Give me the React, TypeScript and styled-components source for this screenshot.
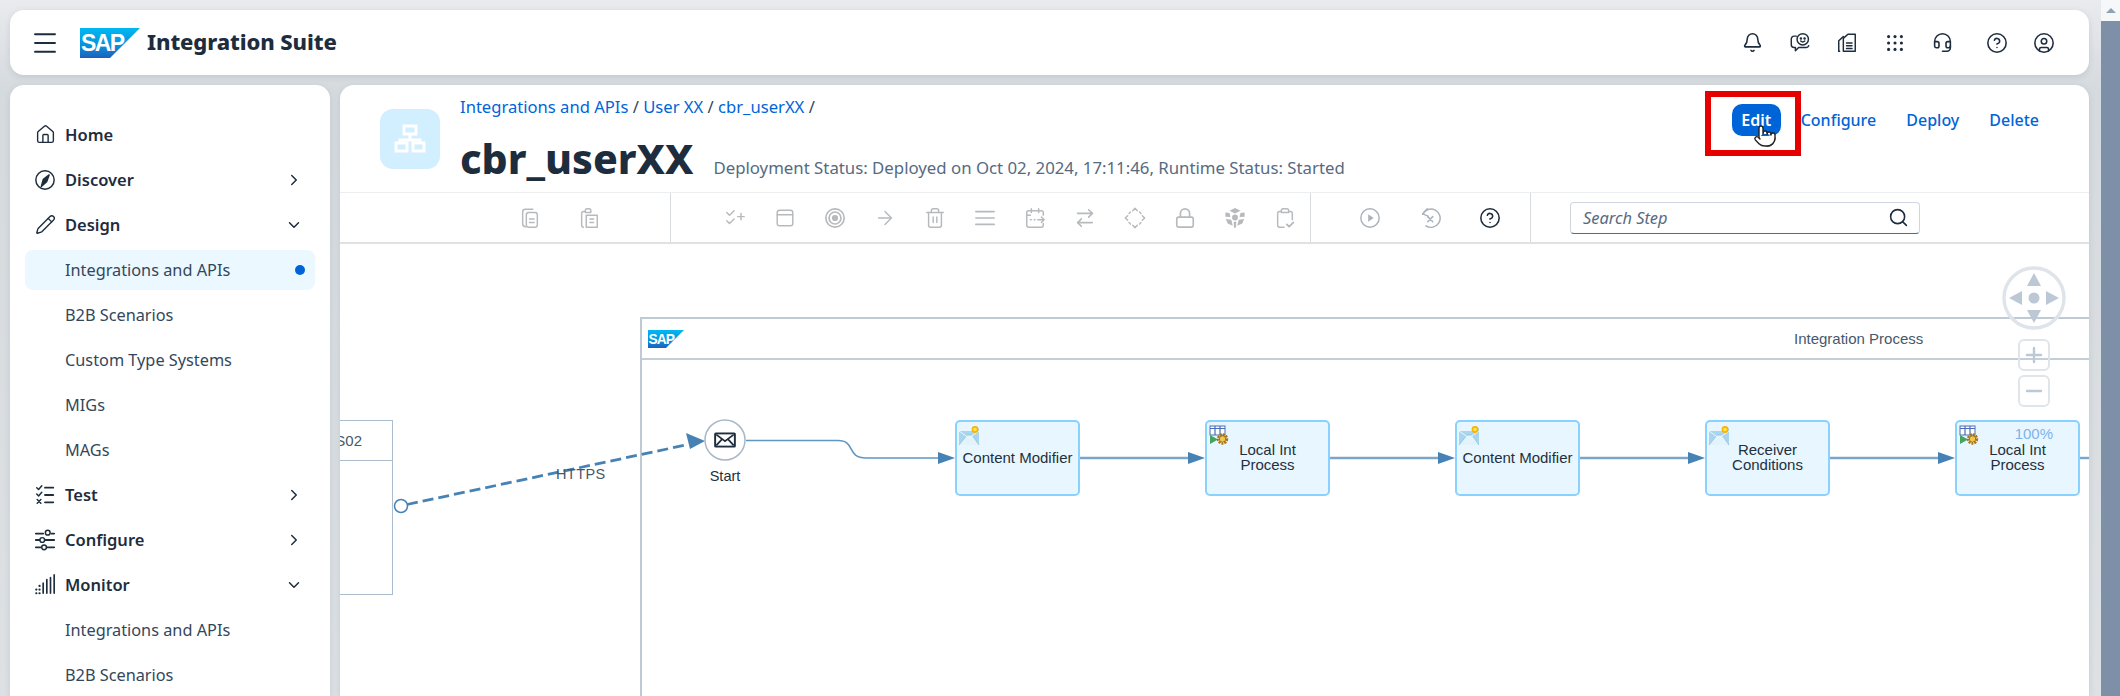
import React from "react"
import styled, { createGlobalStyle } from "styled-components"
import {
  Bell, ChevronDown, ChevronRight, CircleHelp, CircleUser, Headset, Menu, Minus, Plus, Pointer, Search,
  ArrowRight, Trash2, Lock, ArrowRightLeft, Pencil, House,
} from "lucide-react"

const CANVAS_X = 340
const CANVAS_Y = 244

const GlobalStyle = createGlobalStyle`
  html, body { margin: 0; height: 696px; overflow: hidden; }
  body {
    font-family: "Noto Sans", "Open Sans", Arial, sans-serif;
    color: #1d2d3e;
    background: linear-gradient(#e9ebee 0, #d5dade 90px, #dde1e4 100%);
  }
`

const Page = styled.div`
  display: flex;
  height: 696px;
`

const Shell = styled.div`
  flex: 1;
  min-width: 0;
  display: flex;
  flex-direction: column;
  gap: 10px;
  padding: 10px 12px 0 10px;
`

const TopBar = styled.header`
  height: 65px;
  flex: none;
  background: #fff;
  border-radius: 14px;
  box-shadow: 0 2px 6px rgba(60, 75, 90, 0.14);
  display: flex;
  align-items: center;
  padding: 0 29px 0 20px;
`

const MenuButton = styled.div`
  width: 30px;
  display: flex;
  margin-right: 20px;
`

const Brand = styled.div`
  font-size: 22px;
  font-weight: 800;
  margin-left: 7px;
  margin-bottom: 3px;
  letter-spacing: -0.1px;
`

const ShellIcons = styled.div`
  margin-left: auto;
  display: flex;
  align-items: center;
`

const ShellIcon = styled.div<{ $w: number }>`
  width: ${({ $w }) => $w}px;
  display: flex;
  justify-content: center;
`

const Body = styled.div`
  flex: 1;
  min-height: 0;
  display: flex;
  gap: 10px;
`

const Sidebar = styled.nav`
  width: 320px;
  flex: none;
  background: #fff;
  border-radius: 14px 14px 0 0;
  box-shadow: 0 2px 6px rgba(60, 75, 90, 0.14);
  padding-top: 27px;
  overflow: hidden;
  display: flex;
  flex-direction: column;
`

const NavRow = styled.div`
  height: 45px;
  flex: none;
  display: flex;
  align-items: center;
  padding: 0 27px 0 23px;
  font-size: 16.5px;
  font-weight: 600;
`

const NavIcon = styled.span`
  width: 24px;
  margin-right: 8px;
  display: flex;
  justify-content: center;
`

const NavChevron = styled.span`
  margin-left: auto;
  display: flex;
`

const SubRow = styled.div<{ $active?: boolean }>`
  height: 40px;
  flex: none;
  margin: 2.5px 15px;
  padding: 0 10px 0 40px;
  display: flex;
  align-items: center;
  justify-content: space-between;
  border-radius: 8px;
  font-size: 16.3px;
  color: #33475b;
  background: ${({ $active }) => ($active ? "#ebf8ff" : "transparent")};
`

const ActiveDot = styled.span`
  width: 10px;
  height: 10px;
  border-radius: 50%;
  background: #0064d9;
`

const Main = styled.main`
  flex: 1;
  min-width: 0;
  background: #fff;
  border-radius: 14px 14px 0 0;
  box-shadow: 0 2px 6px rgba(60, 75, 90, 0.14);
  display: flex;
  flex-direction: column;
  overflow: hidden;
`

const PageHeader = styled.div`
  height: 107px;
  box-sizing: border-box;
  flex: none;
  display: flex;
  padding: 24px 50px 0 40px;
`

const ObjectIcon = styled.div`
  width: 60px;
  height: 60px;
  border-radius: 13px;
  background: #d1efff;
  display: flex;
  align-items: center;
  justify-content: center;
  margin-right: 20px;
`

const TitleBlock = styled.div`
  margin-top: -13px;
`

const Crumbs = styled.div`
  font-size: 16.6px;
  line-height: 22px;
  color: #33475b;
  & a { color: #0064d9; }
`

const TitleRow = styled.div`
  display: flex;
  align-items: baseline;
  margin-top: 15px;
`

const Title = styled.h1`
  margin: 0;
  font-size: 41px;
  line-height: 50px;
  font-weight: 800;
`

const Status = styled.span`
  margin-left: 20px;
  font-size: 16.8px;
  color: #556b82;
`

const Actions = styled.div`
  margin-left: auto;
  margin-top: -5px;
  height: 32px;
  display: flex;
  align-items: center;
  gap: 30px;
`

const EditWrap = styled.div`
  position: relative;
  margin-right: -10px;
`

const EditButton = styled.div`
  width: 49px;
  height: 32px;
  border-radius: 10px;
  background: #0064d9;
  color: #fff;
  font-size: 16px;
  font-weight: 600;
  display: flex;
  align-items: center;
  justify-content: center;
`

const Highlight = styled.div`
  position: absolute;
  inset: -13px -20px -20px -27px;
  border: 6px solid #e60000;
`

const HandCursor = styled.div`
  position: absolute;
  left: 21px;
  top: 20px;
  display: flex;
`

const ActionLink = styled.span`
  font-size: 16px;
  font-weight: 500;
  color: #0064d9;
`

const Toolbar = styled.div`
  height: 52px;
  box-sizing: border-box;
  flex: none;
  display: flex;
  border-top: 1px solid #eceef0;
  border-bottom: 2px solid #dfe1e3;
`

const ToolGroup = styled.div<{ $w: number; $pad: number }>`
  width: ${({ $w }) => $w}px;
  padding-left: ${({ $pad }) => $pad}px;
  box-sizing: border-box;
  flex: none;
  display: flex;
  align-items: center;
  border-right: 1px solid #d9dcdf;
`

const ToolSlot = styled.div<{ $w: number; $color?: string }>`
  width: ${({ $w }) => $w}px;
  flex: none;
  display: flex;
  justify-content: center;
  color: ${({ $color }) => $color || "#b7babd"};
`

const SearchBox = styled.div`
  margin-left: 39px;
  align-self: center;
  width: 350px;
  height: 32px;
  box-sizing: border-box;
  border: 1px solid #cfd6dd;
  border-bottom: 1.5px solid #556b82;
  border-radius: 4px;
  display: flex;
  align-items: center;
  justify-content: space-between;
  padding: 0 10px 0 12px;
  font-size: 16.4px;
  font-style: italic;
  color: #556b82;
`

const Canvas = styled.div`
  flex: 1;
  position: relative;
  overflow: hidden;
  font-family: "Liberation Sans", Arial, sans-serif;
`

const Edges = styled.svg`
  position: absolute;
  left: 0;
  top: 0;
  z-index: 2;
`

const Pool = styled.div`
  position: absolute;
  left: ${640 - CANVAS_X}px;
  top: ${317 - CANVAS_Y}px;
  width: 1600px;
  height: 600px;
  box-sizing: border-box;
  border: 2px solid #bfcad5;
`

const PoolHeader = styled.div`
  height: 39px;
  border-bottom: 2px solid #c4ced8;
  display: flex;
  align-items: center;
  padding-left: 6px;
  font-size: 15px;
  color: #47586b;
`

const PoolTitle = styled.span`
  position: absolute;
  left: ${1794 - 642}px;
  top: 11px;
`

const Participant = styled.div`
  position: absolute;
  left: -20px;
  top: ${420 - CANVAS_Y}px;
  width: ${393 - CANVAS_X + 20}px;
  height: 175px;
  box-sizing: border-box;
  border: 1.5px solid #abbccd;
`

const ParticipantHead = styled.div`
  height: 39px;
  border-bottom: 1.5px solid #abbccd;
  font-size: 15px;
  color: #47586b;
  line-height: 39px;
  text-align: right;
  padding-right: 30px;
`

const Node = styled.div<{ $x: number }>`
  position: absolute;
  z-index: 3;
  left: ${({ $x }) => $x - CANVAS_X}px;
  top: ${420 - CANVAS_Y}px;
  width: 125px;
  height: 76px;
  box-sizing: border-box;
  background: #e8f6ff;
  border: 2px solid #89d1ff;
  border-radius: 5px;
  display: flex;
  align-items: center;
  justify-content: center;
  text-align: center;
  font-size: 15px;
  line-height: 15px;
  color: #22303e;
  padding-bottom: 2px;
`

const NodeGlyph = styled.svg<{ $top: number }>`
  position: absolute;
  left: 1px;
  top: ${({ $top }) => $top}px;
`

const Progress = styled.span`
  position: absolute;
  right: 25px;
  top: 4px;
  font-size: 15px;
  color: #7fb2ea;
`

const StartLabel = styled.div`
  position: absolute;
  z-index: 3;
  left: ${725 - 30 - CANVAS_X}px;
  top: ${468 - CANVAS_Y}px;
  width: 60px;
  text-align: center;
  font-size: 14.5px;
  color: #22303e;
`

const EdgeLabel = styled.div`
  position: absolute;
  z-index: 3;
  left: ${556 - CANVAS_X}px;
  top: ${466 - CANVAS_Y}px;
  font-size: 14.5px;
  letter-spacing: 0.4px;
  color: #47586b;
`

const ZoomTools = styled.div`
  position: absolute;
  z-index: 4;
  left: ${2002 - CANVAS_X}px;
  top: ${266 - CANVAS_Y}px;
  width: 64px;
  display: flex;
  flex-direction: column;
  align-items: center;
`

const ZoomButton = styled.div`
  width: 32px;
  height: 32px;
  box-sizing: border-box;
  border: 2px solid #e0e5ea;
  border-radius: 6px;
  margin-top: 4px;
  display: flex;
  align-items: center;
  justify-content: center;
  color: #bcc8d5;
  &:first-of-type { margin-top: 9px; }
`

const Scrollbar = styled.div`
  width: 19px;
  flex: none;
  background: #f6f7f8;
  display: flex;
  flex-direction: column;
  align-items: center;
`

const ScrollUp = styled.div`
  height: 21px;
  flex: none;
  display: flex;
  align-items: center;
  &::before {
    content: "";
    border-left: 5px solid transparent;
    border-right: 5px solid transparent;
    border-bottom: 5px solid #8fa1b4;
  }
`

const ScrollThumb = styled.div`
  flex: 1;
  width: 100%;
  background: #7d90a7;
`

const LogoText = styled.text`
  font-family: "Liberation Sans", Arial, sans-serif;
  font-weight: 700;
  font-size: 23px;
  letter-spacing: -1.6px;
  fill: #fff;
`

// SAP logo, the gradient wedge with a real text label
const SapLogo = ({ id, w }: { id: string; w: number }) => (
  <svg width={w} height={w / 2} viewBox="0 0 60 30">
    <defs>
      <linearGradient id={id} x1="0" y1="0" x2="0" y2="1">
        <stop offset="0" stopColor="#00b8f1" />
        <stop offset="0.6" stopColor="#0a8fdc" />
        <stop offset="1" stopColor="#1e5fbb" />
      </linearGradient>
    </defs>
    <polygon points="0,0 60,0 30,30 0,30" fill={`url(#${id})`} />
    <LogoText x="1" y="23">SAP</LogoText>
  </svg>
)

const Glyph = ({ children, size = 22, sw = 1.6 }: { children: React.ReactNode; size?: number; sw?: number }) => (
  <svg width={size} height={size} viewBox="0 0 24 24" fill="none" stroke="currentColor" strokeWidth={sw} strokeLinecap="round" strokeLinejoin="round">
    {children}
  </svg>
)

const icons: Record<string, React.ReactNode> = {
  feedback: <>
    <path d="M8 4.500H5.500a3 3 0 0 0-3 3V14a3 3 0 0 0 3 3H7v3.500l3.500-3.500H19a3 3 0 0 0 2.500-2" />
    <circle cx="15" cy="8" r="6.200" />
    <circle cx="13" cy="7" r=".6" fill="currentColor" /><circle cx="17" cy="7" r=".6" fill="currentColor" />
    <path d="M12.800 9.800c1.300 1.200 3.100 1.200 4.400 0" />
  </>,
  notes: <>
    <path d="M8 5 3 9.500V21" /><path d="M3 21h1" />
    <path d="M8 21V7l5-4.500h8V21Z" />
    <path d="M11.500 12h6M11.500 15h6M11.500 18h6" />
  </>,
  apps: <>
    {[5, 12, 19].map(x => [5, 12, 19].map(y => <circle key={`${x}${y}`} cx={x} cy={y} r="1.700" fill="currentColor" stroke="none" />))}
  </>,
  compass: <>
    <circle cx="12" cy="12" r="10" />
    <path d="M16.500 6.500 13.800 13.800 8 19l2.200-7.800Z" fill="currentColor" />
  </>,
  test: <>
    <path d="m3 4 2 2 3.500-4M3 11l2 2 3.500-4M3.500 17l4 4M7.500 17l-4 4" />
    <path d="M12 4h9M12 12h9M12 20h9" strokeWidth="2" />
  </>,
  sliders: <>
    <path d="M2 5h8M14 20h8M2 12h4M12 12h10M2 20h5" strokeWidth="2" />
    <path d="M19 5h3" strokeWidth="2" />
    <circle cx="15" cy="4" r="2.600" /><circle cx="9" cy="12" r="2.600" /><circle cx="11" cy="20" r="2.600" />
  </>,
  monitor: <>
    <path d="M14 6v15M18 4v17M22 1v20M10 10v11" strokeWidth="1.800" />
    <path d="M2.500 21h.1M2.500 17h.1M6 21h.1M6 17h.1M6 13h.1" strokeWidth="2.400" />
  </>,
  copy: <>
    <path d="M7 2.500h8M4 5.500c0-1.500 1-3 3-3M4 5.500V18c0 2 1 3.500 3 3.500" />
    <rect x="8" y="6" width="12" height="16" rx="2.500" /><path d="M11.500 13h5M11.500 17h5" />
  </>,
  paste: <>
    <path d="M8 5H6a2 2 0 0 0-2 2v13a2 2 0 0 0 2 2" /><path d="M8 6V4a2 2 0 0 1 2-2h2a2 2 0 0 1 2 2v2Z" />
    <rect x="9" y="9" width="12" height="13" /><path d="M13 13h4M13 17h4" />
  </>,
  checkPlus: <>
    <path d="m3 6 3 3 5-5M3 15l3 3 5-5M15 10.500h7M18.500 7v7" />
  </>,
  window: <>
    <rect x="3.500" y="3.500" width="17" height="17" rx="2.500" /><path d="M3.500 8.500h17" />
  </>,
  target: <>
    <circle cx="12" cy="12" r="10" strokeWidth="1.800" /><circle cx="12" cy="12" r="6.500" strokeWidth="1.800" /><circle cx="12" cy="12" r="2.600" fill="currentColor" />
  </>,
  lines: <>
    <path d="M2 5h20M2 12h20M2 19h20" strokeWidth="1.800" />
  </>,
  calendar: <>
    <path d="M21 9V6a2 2 0 0 0-2-2H5a2 2 0 0 0-2 2v14a2 2 0 0 0 2 2h14a2 2 0 0 0 2-2v-2" />
    <path d="M8 2v4M16 2v4M3 9h4M7 14h1M11 14h1M15 14h7M19 11l3 3-3 3" />
  </>,
  diamond: <>
    <path d="M9.500 4 12 1.500 14.500 4M20 9.500 22.500 12 20 14.500M14.500 20 12 22.500 9.500 20M4 14.500 1.500 12 4 9.500M17 5.500 18.500 7M17 18.500l1.500-1.500M7 18.500 5.500 17M7 5.500 5.500 7" />
  </>,
  hub: <g fill="currentColor" stroke="none">
    <polygon points="12,1 18,4 12,7 6,4" /><circle cx="12" cy="11.500" r="3.200" />
    <polygon points="1.500,6 6,6.500 7,11 1.500,10.500" /><polygon points="22.500,6 18,6.500 17,11 22.500,10.500" />
    <polygon points="2,13 8,14 9.500,20.500 4,18" /><polygon points="22,13 16,14 14.500,20.500 20,18" />
    <polygon points="10.500,16 13.500,16 13,22.500 11,22.500" />
  </g>,
  clipboardCheck: <>
    <path d="M8 5H6a2 2 0 0 0-2 2v13a2 2 0 0 0 2 2h5" /><path d="M16 5h2a2 2 0 0 1 2 2v7" />
    <path d="M8 6V4a2 2 0 0 1 2-2h4a2 2 0 0 1 2 2v2Z" /><path d="m14 19 2.500 2.500L21 17" strokeWidth="2" />
  </>,
  play: <>
    <circle cx="12" cy="12" r="10" /><polygon points="10,8 16,12 10,16" fill="currentColor" stroke="none" />
  </>,
  reset: <>
    <path d="M4 8a10 10 0 1 1 3.500 12.500" /><path d="M9 2 4 7.500 10 10" /><path d="m9.500 10.500 5.500 5.500M15 10.500 9.500 16" />
  </>,
  mail: <>
    <rect x="2" y="5" width="20" height="14" rx="1.500" fill="#1d2d3e" stroke="none" />
    <rect x="3.800" y="6.800" width="16.400" height="10.400" fill="#fff" stroke="none" />
    <path d="m4 7 8 6 8-6M4 17l5.500-6M20 17l-5.500-6" stroke="#1d2d3e" strokeWidth="1.600" fill="none" />
  </>,
}

const ToolIcon = ({ name }: { name: string }) => <Glyph>{icons[name]}</Glyph>

const ContentGlyph = () => (
  <NodeGlyph $top={4} width="22" height="20" viewBox="0 0 22 20">
    <path d="M1 5 14 5 21 2V19H1Z" fill="#a9d6ee" />
    <path d="M1 19 9 9 14 9 21 19" fill="#e3f3fb" stroke="#8cc1de" strokeWidth=".8" />
    <path d="M1 5 11 12 21 5" fill="none" stroke="#eaf6fc" strokeWidth="1" />
    <circle cx="17" cy="3.500" r="3.400" fill="#ffb000" />
    <circle cx="17" cy="3.500" r="1.800" fill="#ffe84d" />
  </NodeGlyph>
)

const ProcessGlyph = () => (
  <NodeGlyph $top={3} width="22" height="20" viewBox="0 0 22 20">
    <rect x="2" y="1" width="15" height="9" fill="#fff" stroke="#4b6cb7" strokeWidth="1" />
    <path d="M2 3.500h15M7 1v9M12 1v9" stroke="#4b6cb7" strokeWidth="1.200" />
    <polygon points="2,10 10,14.500 2,19" fill="#43a45e" />
    <circle cx="14.500" cy="14" r="4.500" fill="none" stroke="#a8741a" strokeWidth="2.400" strokeDasharray="2 1" />
    <circle cx="14.500" cy="14" r="3.200" fill="#f2c84b" stroke="#8a5d12" strokeWidth=".8" />
  </NodeGlyph>
)

const toolsA = ["copy", "paste"]
const toolsC = ["play", "reset"]
const nodes = [
  { x: 955, label: ["Content Modifier"], kind: "content" },
  { x: 1205, label: ["Local Int", "Process"], kind: "process" },
  { x: 1455, label: ["Content Modifier"], kind: "content" },
  { x: 1705, label: ["Receiver", "Conditions"], kind: "content" },
  { x: 1955, label: ["Local Int", "Process"], kind: "process", progress: "100%" },
]

const arrow = (x: number, y: number) => `M${x - 17} ${y - 6}L${x} ${y}L${x - 17} ${y + 6}Z`

const App = () => (
  <Page>
    <GlobalStyle />
    <Shell>
      <TopBar>
        <MenuButton><Menu size={30} strokeWidth={1.5} /></MenuButton>
        <SapLogo id="shell-logo" w={60} />
        <Brand>Integration Suite</Brand>
        <ShellIcons>
          <ShellIcon $w={47}><Bell size={21} strokeWidth={1.8} /></ShellIcon>
          <ShellIcon $w={47}><Glyph>{icons.feedback}</Glyph></ShellIcon>
          <ShellIcon $w={48}><Glyph>{icons.notes}</Glyph></ShellIcon>
          <ShellIcon $w={47}><Glyph>{icons.apps}</Glyph></ShellIcon>
          <ShellIcon $w={48}><Headset size={21} strokeWidth={1.8} /></ShellIcon>
          <ShellIcon $w={62}><CircleHelp size={22} strokeWidth={1.7} /></ShellIcon>
          <ShellIcon $w={32}><CircleUser size={22} strokeWidth={1.7} /></ShellIcon>
        </ShellIcons>
      </TopBar>
      <Body>
        <Sidebar>
          <NavRow><NavIcon><House size={21} strokeWidth={1.6} /></NavIcon>Home</NavRow>
          <NavRow><NavIcon><Glyph>{icons.compass}</Glyph></NavIcon>Discover<NavChevron><ChevronRight size={18} /></NavChevron></NavRow>
          <NavRow><NavIcon><Pencil size={21} strokeWidth={1.6} /></NavIcon>Design<NavChevron><ChevronDown size={18} /></NavChevron></NavRow>
          <SubRow $active>Integrations and APIs<ActiveDot /></SubRow>
          <SubRow>B2B Scenarios</SubRow>
          <SubRow>Custom Type Systems</SubRow>
          <SubRow>MIGs</SubRow>
          <SubRow>MAGs</SubRow>
          <NavRow><NavIcon><Glyph>{icons.test}</Glyph></NavIcon>Test<NavChevron><ChevronRight size={18} /></NavChevron></NavRow>
          <NavRow><NavIcon><Glyph>{icons.sliders}</Glyph></NavIcon>Configure<NavChevron><ChevronRight size={18} /></NavChevron></NavRow>
          <NavRow><NavIcon><Glyph>{icons.monitor}</Glyph></NavIcon>Monitor<NavChevron><ChevronDown size={18} /></NavChevron></NavRow>
          <SubRow>Integrations and APIs</SubRow>
          <SubRow>B2B Scenarios</SubRow>
        </Sidebar>
        <Main>
          <PageHeader>
            <ObjectIcon>
              <svg width="32" height="32" viewBox="0 0 32 32" fill="none" stroke="#fff" strokeWidth="3">
                <rect x="10" y="3" width="12" height="8" />
                <path d="M16 11v6M6 19v-2h20v2" />
                <rect x="2" y="20" width="11" height="8" />
                <rect x="19" y="20" width="11" height="8" />
              </svg>
            </ObjectIcon>
            <TitleBlock>
              <Crumbs><a>Integrations and APIs</a> / <a>User XX</a> / <a>cbr_userXX</a> /</Crumbs>
              <TitleRow>
                <Title>cbr_userXX</Title>
                <Status>Deployment Status: Deployed on Oct 02, 2024, 17:11:46, Runtime Status: Started</Status>
              </TitleRow>
            </TitleBlock>
            <Actions>
              <EditWrap>
                <EditButton>Edit</EditButton>
                <Highlight />
                <HandCursor><Pointer size={24} fill="#fff" color="#222" strokeWidth={1.4} /></HandCursor>
              </EditWrap>
              <ActionLink>Configure</ActionLink>
              <ActionLink>Deploy</ActionLink>
              <ActionLink>Delete</ActionLink>
            </Actions>
          </PageHeader>
          <Toolbar>
            <ToolGroup $w={331} $pad={160}>
              {toolsA.map(t => <ToolSlot key={t} $w={59}><ToolIcon name={t} /></ToolSlot>)}
            </ToolGroup>
            <ToolGroup $w={640} $pad={39}>
              <ToolSlot $w={50}><ToolIcon name="checkPlus" /></ToolSlot>
              <ToolSlot $w={50}><ToolIcon name="window" /></ToolSlot>
              <ToolSlot $w={50}><ToolIcon name="target" /></ToolSlot>
              <ToolSlot $w={50}><ArrowRight size={22} strokeWidth={1.6} /></ToolSlot>
              <ToolSlot $w={50}><Trash2 size={22} strokeWidth={1.6} /></ToolSlot>
              <ToolSlot $w={50}><ToolIcon name="lines" /></ToolSlot>
              <ToolSlot $w={50}><ToolIcon name="calendar" /></ToolSlot>
              <ToolSlot $w={50}><ArrowRightLeft size={22} strokeWidth={1.8} /></ToolSlot>
              <ToolSlot $w={50}><ToolIcon name="diamond" /></ToolSlot>
              <ToolSlot $w={50}><Lock size={22} strokeWidth={1.8} /></ToolSlot>
              <ToolSlot $w={50}><ToolIcon name="hub" /></ToolSlot>
              <ToolSlot $w={50}><ToolIcon name="clipboardCheck" /></ToolSlot>
            </ToolGroup>
            <ToolGroup $w={220} $pad={29}>
              {toolsC.map(t => <ToolSlot key={t} $w={60} $color="#a9b3bd"><ToolIcon name={t} /></ToolSlot>)}
              <ToolSlot $w={60} $color="#1d2d3e"><CircleHelp size={22} strokeWidth={1.7} /></ToolSlot>
            </ToolGroup>
            <SearchBox>Search Step<Search size={21} color="#1d2d3e" strokeWidth={1.8} /></SearchBox>
          </Toolbar>
          <Canvas>
            <Pool>
              <PoolHeader>
                <SapLogo id="pool-logo" w={36} />
                <PoolTitle>Integration Process</PoolTitle>
              </PoolHeader>
            </Pool>
            <Participant>
              <ParticipantHead>S02</ParticipantHead>
            </Participant>
            <Edges width="1749" height="452" viewBox={`${CANVAS_X} ${CANVAS_Y} 1749 452`} fill="none">
              <line x1="407" y1="504.500" x2="688" y2="444.500" stroke="#4682b4" strokeWidth="2.800" strokeDasharray="11 5" />
              <path d="M686 433 705 441 690 449Z" fill="#4682b4" />
              <circle cx="401" cy="506" r="6.500" fill="#fff" stroke="#4682b4" strokeWidth="1.500" />
              <circle cx="725" cy="440" r="20" fill="#fff" stroke="#a9b8c7" strokeWidth="1.500" />
              <svg x="712" y="427" width="26" height="26" viewBox="0 0 24 24">{icons.mail}</svg>
              <path d="M746 440.500H838C856 440.500 846 458 866 458H940" stroke="#5f96c4" strokeWidth="1.600" />
              <path d={arrow(955, 458)} fill="#4682b4" />
              {[1080, 1330, 1580, 1830].map(x => (
                <g key={x}>
                  <line x1={x} y1="458" x2={x + 112} y2="458" stroke="#7ba6cb" strokeWidth="2.400" />
                  <path d={arrow(x + 125, 458)} fill="#4682b4" />
                </g>
              ))}
              <line x1="2080" y1="458" x2="2089" y2="458" stroke="#7ba6cb" strokeWidth="2.400" />
            </Edges>
            <EdgeLabel>HTTPS</EdgeLabel>
            <StartLabel>Start</StartLabel>
            {nodes.map(n => (
              <Node key={n.x} $x={n.x}>
                {n.kind === "content" ? <ContentGlyph /> : <ProcessGlyph />}
                {n.progress && <Progress>{n.progress}</Progress>}
                <div>{n.label.map(l => <div key={l}>{l}</div>)}</div>
              </Node>
            ))}
            <ZoomTools>
              <svg width="64" height="64" viewBox="0 0 64 64">
                <circle cx="32" cy="32" r="30" fill="none" stroke="#dfe4ea" strokeWidth="3.400" />
                <g fill="#bcc8d5">
                  <polygon points="32,7 25,20 39,20" /><polygon points="32,57 25,44 39,44" />
                  <polygon points="7,32 20,25 20,39" /><polygon points="57,32 44,25 44,39" />
                  <circle cx="32" cy="32" r="5.500" />
                </g>
              </svg>
              <ZoomButton><Plus size={24} strokeWidth={2.4} /></ZoomButton>
              <ZoomButton><Minus size={24} strokeWidth={2.4} /></ZoomButton>
            </ZoomTools>
          </Canvas>
        </Main>
      </Body>
    </Shell>
    <Scrollbar>
      <ScrollUp />
      <ScrollThumb />
    </Scrollbar>
  </Page>
)

export default App
